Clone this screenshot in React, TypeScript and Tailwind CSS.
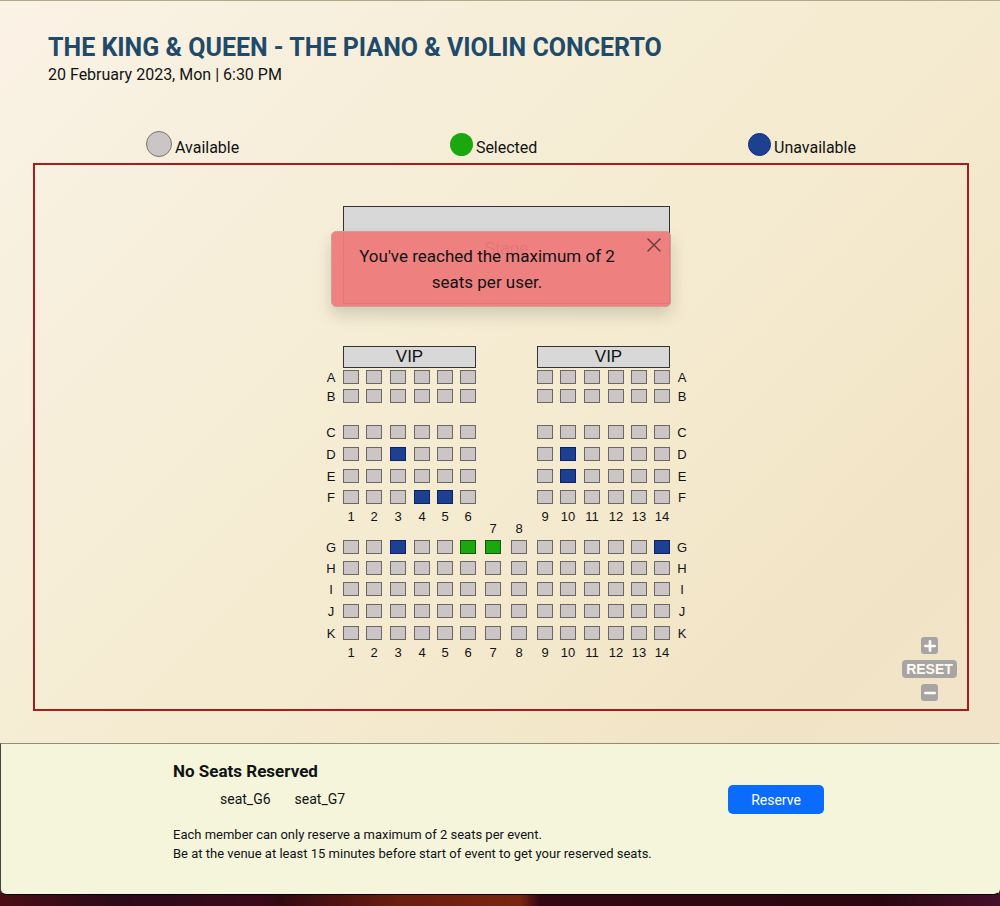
import { useState } from "react";
import { Minus, Plus, X } from "lucide-react";

type Row = { name: string; full: boolean };

const UPPER: Row[] = ["A", "B", "C", "D", "E", "F"].map((name) => ({ name, full: false }));
const LOWER: Row[] = ["G", "H", "I", "J", "K"].map((name) => ({ name, full: true }));
const NUMBERS = [1, 2, 3, 4, 5, 6, 7, 8, 9, 10, 11, 12, 13, 14];
const TAKEN = ["D3", "D10", "E10", "F4", "F5", "G3", "G14"];
const MAX_SEATS = 2;

const LEGEND = [
  { label: "Available", dot: "size-[26px] bg-[#cbc5c6] border border-[#77746c]" },
  { label: "Selected", dot: "size-[23px] bg-[#1aa80e]" },
  { label: "Unavailable", dot: "size-[23px] bg-[#1d4090] border border-[#0c2c86]" },
];

function Seat({
  id,
  selected,
  onToggle,
}: {
  id: string;
  selected: boolean;
  onToggle: (id: string) => void;
}) {
  const taken = TAKEN.includes(id);
  const tone = taken
    ? "bg-[#1d4090] border-[#0b1f6b]"
    : selected
      ? "bg-[#1aa80e] border-[#0b5c07]"
      : "bg-[#cbc5c6] border-[#6a6764]";
  return (
    <button
      type="button"
      aria-label={`Seat ${id}`}
      aria-pressed={selected}
      disabled={taken}
      onClick={() => onToggle(id)}
      className={`h-3.5 w-4 border ${tone}`}
    />
  );
}

function SeatRow({
  row,
  selected,
  onToggle,
}: {
  row: Row;
  selected: string[];
  onToggle: (id: string) => void;
}) {
  return (
    <>
      <span className="w-3 text-center">{row.name}</span>
      {NUMBERS.map((n) => {
        const id = `${row.name}${n}`;
        if (!row.full && (n === 7 || n === 8)) return <span key={id} />;
        return <Seat key={id} id={id} selected={selected.includes(id)} onToggle={onToggle} />;
      })}
      <span className="w-3 text-center">{row.name}</span>
    </>
  );
}

function NumberRow({ aisleLower }: { aisleLower: boolean }) {
  return (
    <>
      <span />
      {NUMBERS.map((n) => (
        <span
          key={n}
          className={`flex w-4 justify-center leading-5 ${
            aisleLower && (n === 7 || n === 8) ? "pt-3" : ""
          }`}
        >
          {n}
        </span>
      ))}
      <span />
    </>
  );
}

export default function App() {
  const [selected, setSelected] = useState<string[]>(["G6", "G7"]);
  const [warning, setWarning] = useState(true);

  const toggle = (id: string) => {
    if (selected.includes(id)) setSelected(selected.filter((s) => s !== id));
    else if (selected.length >= MAX_SEATS) setWarning(true);
    else setSelected([...selected, id]);
  };

  return (
    <div className="flex min-h-screen flex-col bg-[linear-gradient(90deg,#4a0d14_0%,#2c0a1a_12%,#3a0a1b_26%,#330a12_28%,#6b1d10_40%,#7a2410_52%,#330813_54%,#2a0710_88%,#45102a_100%)] font-[Roboto,sans-serif] text-[#101314]">
      <main className="border-t border-[#b5a888] bg-[linear-gradient(135deg,#fbf2e6_0%,#f8f0df_15%,#f5ecd3_45%,#f4e9cd_65%,#f1e3c5_85%,#f1e4c9_100%)] pr-[31px] pb-8 pl-[33px]">
        <header className="px-[15px] pt-8">
          <h1 className="text-[25px] leading-[30px] font-bold text-[#204a69]">
            THE KING &amp; QUEEN - THE PIANO &amp; VIOLIN CONCERTO
          </h1>
          <p className="text-base leading-6">20 February 2023, Mon | 6:30 PM</p>
        </header>

        <ul className="mt-11 flex h-8 justify-between px-[113px]">
          {LEGEND.map((item) => (
            <li key={item.label} className="flex gap-[3px]">
              <span className="flex h-[26px] items-center">
                <span className={`rounded-full ${item.dot}`} />
              </span>
              <span className="pt-[5px] text-base leading-6">{item.label}</span>
            </li>
          ))}
        </ul>

        <section
          aria-label="Seat map"
          className="relative flex justify-center border-2 border-[#ab1a1c] pt-[41px] pb-[46px] pl-[11px] font-['Liberation_Sans',sans-serif]"
        >
          <div>
            <div className="mx-[18px] flex h-[98px] items-center justify-center border border-[#333] bg-[#d8d8d8] pb-3 text-[17px]">
              Stage
            </div>
            <div className="mx-[18px] mt-[42px] flex justify-between">
              <div className="w-[133px] border border-[#333] bg-[#d8d8d8] text-center text-[17px] leading-5">
                VIP
              </div>
              <div className="w-[133px] border border-[#333] bg-[#d8d8d8] pl-2.5 text-center text-[17px] leading-5">
                VIP
              </div>
            </div>
            <div className="mt-0.5 grid grid-cols-[18px_23px_24px_24px_23px_23px_25px_26px_26px_23px_24px_24px_23px_23px_22px_12px] grid-rows-[19px_36px_22px_22px_21px_17px_33px_21px_21px_22px_22px_17px_20px] items-start text-[13px] leading-4">
              {UPPER.map((row) => (
                <SeatRow key={row.name} row={row} selected={selected} onToggle={toggle} />
              ))}
              <NumberRow aisleLower />
              {LOWER.map((row) => (
                <SeatRow key={row.name} row={row} selected={selected} onToggle={toggle} />
              ))}
              <NumberRow aisleLower={false} />
            </div>
          </div>

          {warning && (
            <div
              role="alert"
              className="absolute top-[66px] left-1/2 flex w-[340px] -translate-x-1/2 items-start rounded-[5px] border border-[#c9a294] bg-[#ef7b7b]/95 py-[11px] font-[Roboto,sans-serif] shadow-[0_8px_16px_rgba(0,0,0,0.15)]"
            >
              <p className="flex-1 px-4 text-center text-[17px] leading-[26px]">
                You've reached the maximum of 2 seats per user.
              </p>
              <button
                type="button"
                aria-label="Close"
                onClick={() => setWarning(false)}
                className="-mt-2.5 mr-1 text-[#6e3d3f]"
              >
                <X className="size-6" strokeWidth={1.5} />
              </button>
            </div>
          )}

          <div className="absolute right-2.5 bottom-2 flex flex-col items-center gap-1.5 text-[#fffaf0]">
            <button
              type="button"
              aria-label="Zoom in"
              className="flex size-[17px] items-center justify-center rounded-[3px] bg-[#a7a5a4]"
            >
              <Plus className="size-4" strokeWidth={4} />
            </button>
            <button
              type="button"
              className="h-[18px] w-[55px] rounded-[4px] bg-[#a7a5a4] text-center text-sm leading-[18px] font-bold"
            >
              RESET
            </button>
            <button
              type="button"
              aria-label="Zoom out"
              className="flex size-[17px] items-center justify-center rounded-[3px] bg-[#a7a5a4]"
            >
              <Minus className="size-4" strokeWidth={4} />
            </button>
          </div>
        </section>
      </main>

      <footer className="flex items-start justify-between rounded-b-md border border-t-[#8f8b78] border-r-transparent border-b-black border-l-[#444] bg-[#f5f5dc] pt-[15px] pr-[175px] pb-[31px] pl-[172px]">
        <div>
          <h2 className="text-[17px] leading-6 font-bold">No Seats Reserved</h2>
          <ul className="mt-1.5 flex h-5 gap-6 pl-[47px] text-sm leading-5">
            {selected.map((id) => (
              <li key={id}>seat_{id}</li>
            ))}
          </ul>
          <p className="mt-4 text-[13px] leading-[19px]">
            Each member can only reserve a maximum of 2 seats per event.
            <br />
            Be at the venue at least 15 minutes before start of event to get your reserved seats.
          </p>
        </div>
        <button
          type="button"
          className="mt-[26px] h-[29px] w-24 rounded-[5px] bg-[#0a6cff] text-sm text-white"
        >
          Reserve
        </button>
      </footer>
    </div>
  );
}
